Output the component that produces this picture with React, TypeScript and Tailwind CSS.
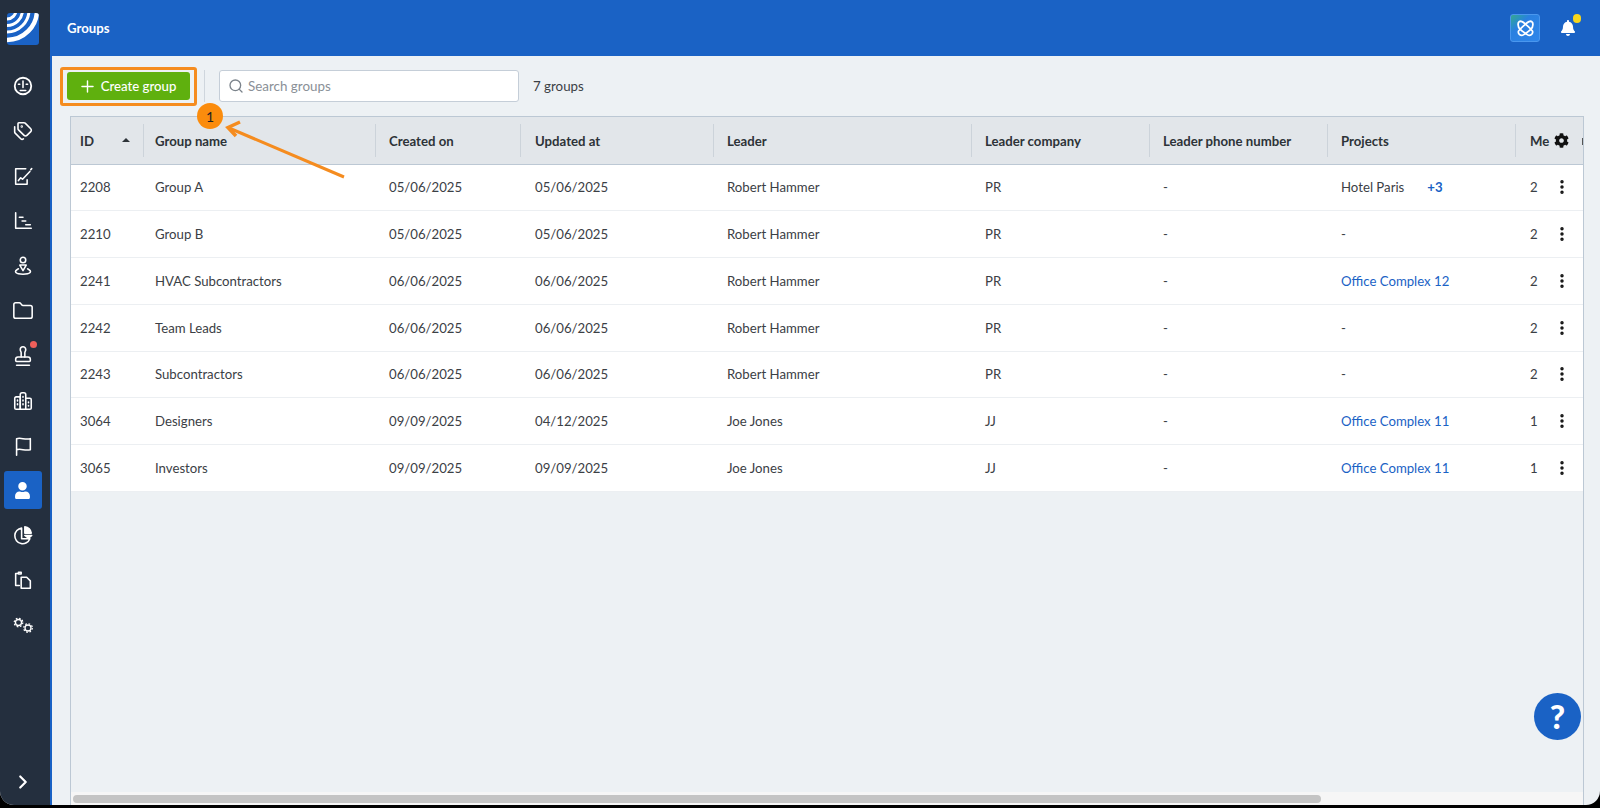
import React from "react"
import { ChevronRight, EllipsisVertical, Folder, Plus, Search, Stamp, Tags } from "lucide-react"
import { FaBell, FaCog, FaUser } from "react-icons/fa"

type Row = { id: string; name: string; created: string; updated: string; leader: string; company: string; project: string; members: string; extra?: string; link?: boolean }

const rows: Row[] = [
  { id: "2208", name: "Group A", created: "05/06/2025", updated: "05/06/2025", leader: "Robert Hammer", company: "PR", project: "Hotel Paris", extra: "+3", members: "2" },
  { id: "2210", name: "Group B", created: "05/06/2025", updated: "05/06/2025", leader: "Robert Hammer", company: "PR", project: "-", members: "2" },
  { id: "2241", name: "HVAC Subcontractors", created: "06/06/2025", updated: "06/06/2025", leader: "Robert Hammer", company: "PR", project: "Office Complex 12", link: true, members: "2" },
  { id: "2242", name: "Team Leads", created: "06/06/2025", updated: "06/06/2025", leader: "Robert Hammer", company: "PR", project: "-", members: "2" },
  { id: "2243", name: "Subcontractors", created: "06/06/2025", updated: "06/06/2025", leader: "Robert Hammer", company: "PR", project: "-", members: "2" },
  { id: "3064", name: "Designers", created: "09/09/2025", updated: "04/12/2025", leader: "Joe Jones", company: "JJ", project: "Office Complex 11", link: true, members: "1" },
  { id: "3065", name: "Investors", created: "09/09/2025", updated: "09/09/2025", leader: "Joe Jones", company: "JJ", project: "Office Complex 11", link: true, members: "1" },
]

const columns = "grid grid-cols-[73px_232px_145px_193px_258px_178px_178px_188px_67px]"

const Line = ({ children }: { children: React.ReactNode }) => (
  <svg viewBox="0 0 24 24" width={22} height={22} fill="none" stroke="white" strokeWidth={1.7} strokeLinecap="round" strokeLinejoin="round">
    {children}
  </svg>
)

const GaugeIcon = () => (
  <Line>
    <circle cx="12" cy="12" r="9" strokeWidth={2} />
    <path d="M12 6.500v7M7 10h1.500M15.500 10H17M9 17h6" />
  </Line>
)

const FormIcon = () => (
  <Line>
    <path d="M15 4H4v17h12.500v-5" />
    <path d="M7 17l2.500-3 2 1.500 8-8.500M20.500 5l1-1" />
  </Line>
)

const ChartIcon = () => (
  <Line>
    <path d="M4 3v17h17" />
    <path d="M8 8h4M11 12h4M15 16h5" />
  </Line>
)

const PinIcon = () => (
  <Line>
    <circle cx="12" cy="5.500" r="3" />
    <path d="M8.500 11h7L12 17zM7 15c-6 3-3 6 5 6s11-3 5-6" />
  </Line>
)

const BuildingsIcon = () => (
  <Line>
    <path d="M9 21H4.500a1.500 1.500 0 0 1-1.500-1.500V9a1.500 1.500 0 0 1 1.500-1.500H9z" />
    <path d="M9 21V5a2 2 0 0 1 2-2h2a2 2 0 0 1 2 2v16z" />
    <path d="M15 9h4.500a1.500 1.500 0 0 1 1.500 1.500v9a1.500 1.500 0 0 1-1.500 1.500H15" />
    <path d="M6 11v1M6 15v1M12 7v1M12 11v1M12 15v1M18 13v1M18 17v.5" />
  </Line>
)

const FlagIcon = () => (
  <Line>
    <path d="M5 22V4c5-1.500 9 1.500 15 0v12c-6 1.500-10-1.500-15 0" />
  </Line>
)

const PieIcon = () => (
  <Line>
    <path d="M10.500 4.500a8.500 8.500 0 1 0 9 11.500h-9z" />
    <path d="M14 3a7.500 7.500 0 0 1 7 7h-7z" fill="white" />
    <path d="M14 12.500h7.500l-3.500 3z" fill="white" />
  </Line>
)

const CopyIcon = () => (
  <Line>
    <path d="M8 18H4V5h3M7 3.500h3v2H7z" />
    <path d="M10 9h6l4 4v8H10z" />
  </Line>
)

const GearsIcon = () => (
  <svg viewBox="0 0 24 24" width={24} height={24} fill="none" stroke="white">
    <circle cx="7.500" cy="9.500" r="3" strokeWidth="1.300" />
    <circle cx="7.500" cy="9.500" r="4.300" strokeWidth="1.200" strokeDasharray="1.700 1.680" />
    <circle cx="17" cy="15" r="3" strokeWidth="1.300" />
    <circle cx="17" cy="15" r="4.300" strokeWidth="1.200" strokeDasharray="1.700 1.680" />
  </svg>
)

const Logo = () => (
  <svg viewBox="0 0 32 32" width={32} height={32} className="rounded-[3px]">
    <rect width="32" height="32" fill="#1a62c5" />
    <g fill="none" stroke="white">
      <circle cx="0" cy="-3" r="9" strokeWidth="3" />
      <circle cx="0" cy="-3" r="15.500" strokeWidth="3" />
      <circle cx="0" cy="-3" r="22" strokeWidth="3" />
      <circle cx="0" cy="-3" r="30" strokeWidth="4.500" />
    </g>
  </svg>
)

const sideItems = [
  { icon: <GaugeIcon /> },
  { icon: <Tags size={20} color="white" strokeWidth={1.9} /> },
  { icon: <FormIcon /> },
  { icon: <ChartIcon /> },
  { icon: <PinIcon /> },
  { icon: <Folder size={22} color="white" strokeWidth={1.7} /> },
  { icon: <Stamp size={22} color="white" strokeWidth={1.7} />, dot: true },
  { icon: <BuildingsIcon /> },
  { icon: <FlagIcon /> },
  { icon: <FaUser size={17} color="white" />, active: true },
  { icon: <PieIcon /> },
  { icon: <CopyIcon /> },
  { icon: <GearsIcon /> },
]

const Sidebar = () => (
  <aside className="flex w-[52px] shrink-0 flex-col border-r-2 border-[#1a62c5] bg-[#242f3e]">
    <div className="flex h-[64px] shrink-0 items-start justify-center pt-[13px] pr-[5px]">
      <Logo />
    </div>
    {sideItems.map((item, i) => (
      <div key={i} className="relative flex h-[44.900px] shrink-0 items-center justify-center pr-[5px]">
        <div className={"flex h-[38px] w-[38px] items-center justify-center rounded-[3px] " + (item.active ? "bg-[#1a62c5]" : "")}>
          {item.icon}
        </div>
        {item.dot && <span className="absolute top-[8px] right-[13px] h-[7px] w-[7px] rounded-full bg-[#ef5f5a]" />}
      </div>
    ))}
    <div className="mt-auto flex h-[46px] items-center justify-center pr-[5px]">
      <ChevronRight size={22} color="white" strokeWidth={2.4} />
    </div>
  </aside>
)

const Topbar = () => (
  <header className="flex h-[56px] shrink-0 items-center justify-between bg-[#1a62c5] pr-[23px] pl-[15px]">
    <h1 className="pt-[1px] text-[13.200px] font-bold text-white">Groups</h1>
    <div className="flex items-center gap-[19px]">
      <div className="flex h-[28px] w-[30px] items-center justify-center rounded-[3px] border border-[#4a97ee] bg-gradient-to-br from-[#3aa68c] via-[#2a80e0] via-35% to-[#2f86ea]">
        <svg viewBox="0 0 24 24" width={21} height={21} fill="none" stroke="white" strokeWidth={2}>
          <path d="M4 5c2-3 6 0 8 2s6 5 8 8c1 4-3 6-6 4s-6-4-8-6-3-5-2-8z" />
          <path d="M20 5c-2-3-6 0-8 2s-6 5-8 8c-1 4 3 6 6 4s6-4 8-6 3-5 2-8z" />
        </svg>
      </div>
      <div className="relative flex h-[28px] w-[18px] items-center justify-center">
        <FaBell size={16} color="white" />
        <span className="absolute top-0 right-[-4px] h-[8.500px] w-[8.500px] rounded-full bg-[#f8d61c]" />
      </div>
    </div>
  </header>
)

const Toolbar = () => (
  <div className="flex h-[60px] shrink-0 items-center pl-[15px]">
    <button className="flex h-[28px] w-[123px] items-center justify-center gap-[4px] rounded-[3px] bg-[#5fb00e] pr-[3px] text-[13.200px] font-medium text-white">
      <Plus size={19} strokeWidth={1.8} />
      <span className="pt-[2px]">Create group</span>
    </button>
    <div className="mr-[14px] ml-[14px] h-[32px] w-px bg-[#cfd6dd]" />
    <div className="flex h-[32px] w-[300px] items-center gap-[4px] rounded-[3px] border border-[#c5ced8] bg-white px-[8px]">
      <Search size={16} color="#7b838b" />
      <span className="pt-[1px] text-[13.400px] text-[#8a9097]">Search groups</span>
    </div>
    <span className="ml-[14px] pt-[1px] text-[13.300px] text-[#3b4045]">7 groups</span>
  </div>
)

const Table = () => (
  <div className="relative mr-[16px] ml-[18px] flex flex-1 flex-col overflow-hidden border-x border-t border-[#bcc8d4] text-[13.200px] text-[#3b4045]">
    <div className={columns + " h-[47.500px] shrink-0 border-b border-[#bcc8d4] bg-[#e2e6ea] font-bold text-[#2d3338]"}>
      <div className="my-[7px] flex items-center justify-between border-r border-[#ccd3da] pt-[3px] pr-[13px] pl-[9px]">
        ID
        <span className="mb-[4px] h-0 w-0 border-x-[4px] border-b-[4px] border-x-transparent border-b-[#2d3338]" />
      </div>
      <div className="my-[7px] flex items-center border-r border-[#ccd3da] pt-[3px] pl-[11px]">Group name</div>
      <div className="my-[7px] flex items-center border-r border-[#ccd3da] pt-[3px] pl-[13px]">Created on</div>
      <div className="my-[7px] flex items-center border-r border-[#ccd3da] pt-[3px] pl-[14px]">Updated at</div>
      <div className="my-[7px] flex items-center border-r border-[#ccd3da] pt-[3px] pl-[13px]">Leader</div>
      <div className="my-[7px] flex items-center border-r border-[#ccd3da] pt-[3px] pl-[13px]">Leader company</div>
      <div className="my-[7px] flex items-center border-r border-[#ccd3da] pt-[3px] pl-[13px]">Leader phone number</div>
      <div className="my-[7px] flex items-center border-r border-[#ccd3da] pt-[3px] pl-[13px]">Projects</div>
      <div className="flex items-center pt-[1px] pl-[14px]">
        <span className="w-[20px] pt-[2px]">Me</span>
        <FaCog size={15} color="#111" className="ml-[4px]" />
      </div>
    </div>
    <div className="absolute top-[21px] right-0 h-[7px] w-[1.500px] bg-[#555]" />
    {rows.map(row => (
      <div key={row.id} className={columns + " h-[46.750px] shrink-0 items-center border-b border-[#eceff2] bg-white"}>
        <div className="pt-[2px] pl-[9px]">{row.id}</div>
        <div className="pt-[2px] pl-[11px]">{row.name}</div>
        <div className="pt-[2px] pl-[13px]">{row.created}</div>
        <div className="pt-[2px] pl-[14px]">{row.updated}</div>
        <div className="pt-[2px] pl-[13px]">{row.leader}</div>
        <div className="pt-[2px] pl-[13px]">{row.company}</div>
        <div className="pt-[2px] pl-[13px]">-</div>
        <div className="flex pt-[2px] pl-[13px]">
          <span className={row.link ? "text-[#1a62c5]" : ""}>{row.project}</span>
          {row.extra && <span className="ml-[23px] font-bold text-[#1a62c5]">{row.extra}</span>}
        </div>
        <div className="flex items-center pl-[14px]">
          <span className="w-[20px] pt-[2px]">{row.members}</span>
          <EllipsisVertical size={18} color="#111" strokeWidth={2.6} className="ml-[3px]" />
        </div>
      </div>
    ))}
    <div className="mt-auto flex h-[13px] shrink-0 items-center bg-[#f6f6f6] pl-[2px]">
      <div className="h-[8px] w-[1248px] rounded-full bg-[#c4c4c4]" />
    </div>
  </div>
)

const Annotation = () => (
  <div className="pointer-events-none absolute top-0 left-0">
    <div className="absolute top-[67px] left-[60px] h-[39px] w-[137px] rounded-[3px] border-3 border-[#f58c1f]" />
    <svg width={360} height={190} className="absolute top-0 left-0" fill="none" stroke="#f58c1f" strokeWidth={3}>
      <path d="M344 177L229 128" />
      <path d="M240 122L228 127.500L236 136" strokeWidth={3.500} />
    </svg>
    <div className="absolute top-[103px] left-[197px] flex h-[26px] w-[26px] items-center justify-center rounded-full bg-[#fb8c0d] text-[14px] text-[#222]">
      1
    </div>
  </div>
)

const App = () => (
  <div className="h-[808px] w-[1600px] overflow-hidden bg-black font-['Lato',sans-serif]">
    <div className="relative flex h-[805px] overflow-hidden rounded-b-[14px] bg-[#edf1f4]">
      <Sidebar />
      <main className="flex min-w-0 flex-1 flex-col">
        <Topbar />
        <Toolbar />
        <Table />
      </main>
      <Annotation />
      <div className="absolute top-[693px] left-[1534px] flex h-[47px] w-[47px] items-center justify-center rounded-full bg-[#1a62c5] text-[33px] font-black text-white">
        ?
      </div>
    </div>
  </div>
)

export default App
